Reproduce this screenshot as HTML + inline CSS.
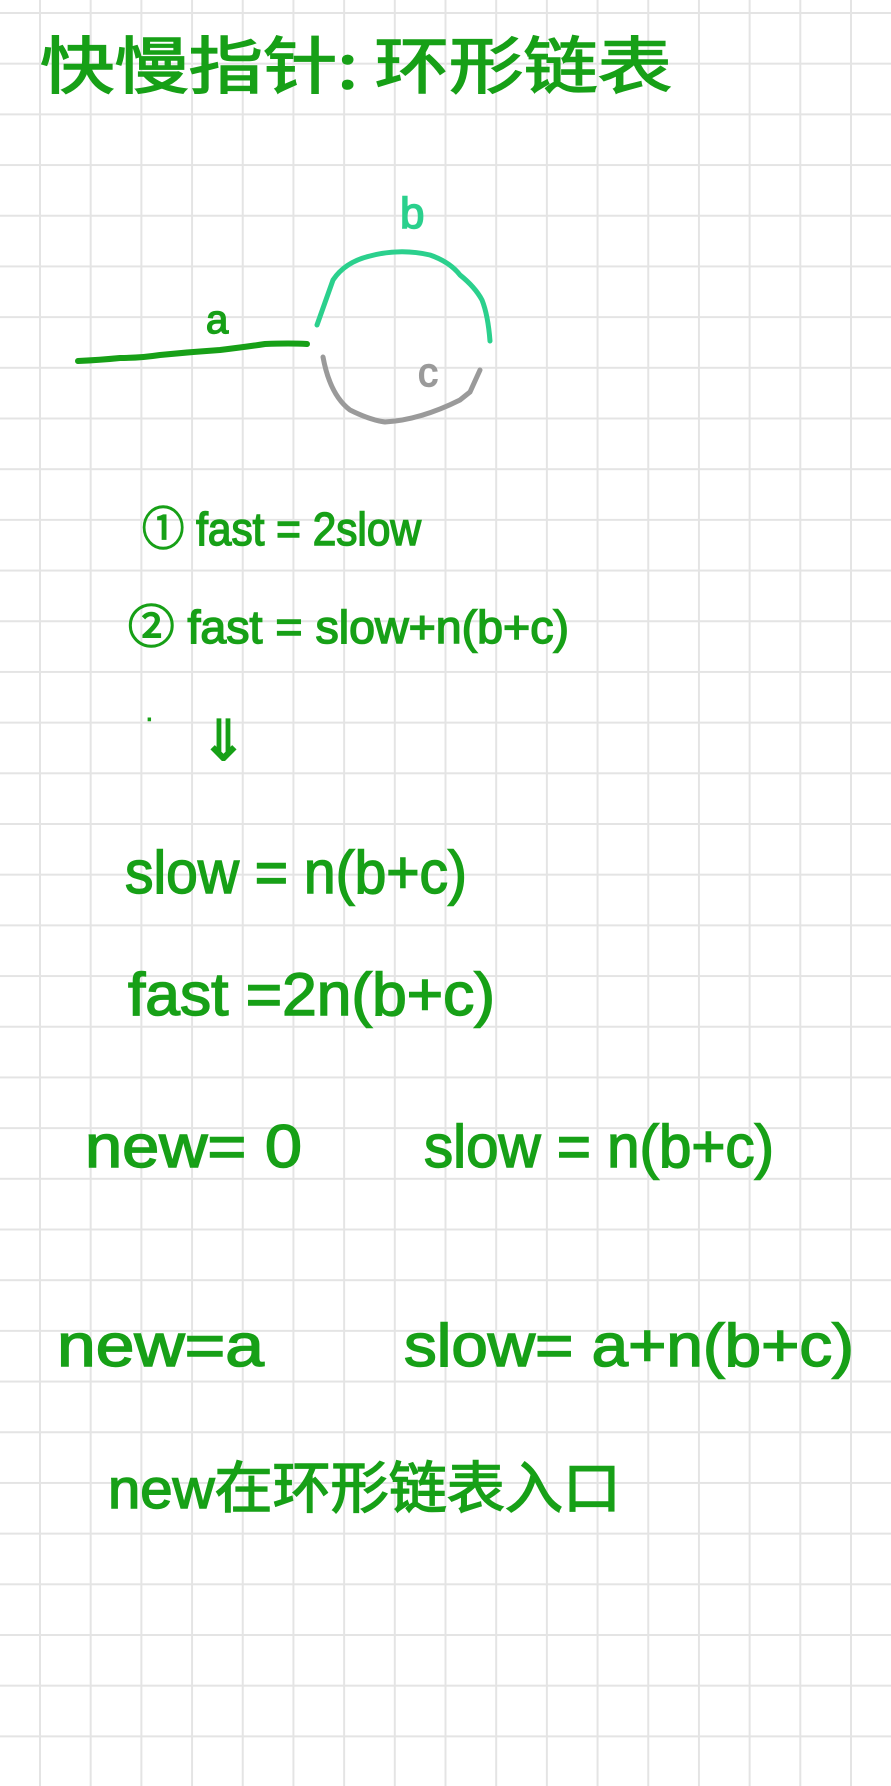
<!DOCTYPE html><html><head><meta charset="utf-8"><style>
html,body{margin:0;padding:0;background:#fff}
body{width:891px;height:1786px;overflow:hidden;
background-image:linear-gradient(to right,#e4e4e4 0,#e4e4e4 2px,transparent 2px),linear-gradient(to bottom,#e4e4e4 0,#e4e4e4 2px,transparent 2px);
background-size:50.7px 50.7px;background-position:39px 12px}
svg{position:absolute;left:0;top:0}
text{font-family:"Liberation Sans","Noto Sans CJK SC",sans-serif;fill:#17a017;stroke:#17a017;stroke-width:1.5}
</style></head><body>
<svg width="891" height="1786" viewBox="0 0 891 1786">
<text x="40" y="88" font-size="62" textLength="632" lengthAdjust="spacingAndGlyphs" style="font-family:'Noto Sans CJK SC',sans-serif">快慢指针: 环形链表</text>
<text x="400" y="228" font-size="44" style="fill:#2bd08d;stroke:#2bd08d">b</text>
<text x="206" y="333" font-size="40">a</text>
<text x="418" y="386" font-size="40" style="fill:#9a9a9a;stroke:#9a9a9a">c</text>
<path d="M78 361 Q100 360 120 358 Q140 358 160 355 Q190 352 220 350 Q245 347 265 344 Q290 343 307 344" fill="none" stroke="#17a017" stroke-width="6" stroke-linecap="round"/>
<path d="M317 325 L333 280 Q345 262 370 256 Q400 248 430 255 Q450 262 460 275 Q475 287 482 300 Q488 315 490 341" fill="none" stroke="#2bd08d" stroke-width="5" stroke-linecap="round"/>
<path d="M323 357 Q330 395 350 410 Q370 420 385 422 Q420 420 460 400 L470 392 L480 370" fill="none" stroke="#9a9a9a" stroke-width="5" stroke-linecap="round"/>
<text x="142" y="545" font-size="46" textLength="279" lengthAdjust="spacingAndGlyphs">① fast = 2slow</text>
<text x="128" y="643" font-size="46" textLength="441" lengthAdjust="spacingAndGlyphs">② fast = slow+n(b+c)</text>
<text x="146" y="725" font-size="20">·</text>
<text x="200" y="760" font-size="56">⇓</text>
<text x="125" y="893" font-size="60" textLength="342" lengthAdjust="spacingAndGlyphs">slow = n(b+c)</text>
<text x="128" y="1015" font-size="60" textLength="367" lengthAdjust="spacingAndGlyphs">fast =2n(b+c)</text>
<text x="85" y="1167" font-size="60" textLength="217" lengthAdjust="spacingAndGlyphs">new=  0</text>
<text x="424" y="1167" font-size="60" textLength="350" lengthAdjust="spacingAndGlyphs">slow = n(b+c)</text>
<text x="57" y="1366" font-size="60" textLength="207" lengthAdjust="spacingAndGlyphs">new=a</text>
<text x="404" y="1366" font-size="60" textLength="450" lengthAdjust="spacingAndGlyphs">slow= a+n(b+c)</text>
<text x="108" y="1508" font-size="56" textLength="513" lengthAdjust="spacingAndGlyphs">new<tspan style="font-family:'Noto Sans CJK SC',sans-serif">在环形链表入口</tspan></text>
</svg>
</body></html>
